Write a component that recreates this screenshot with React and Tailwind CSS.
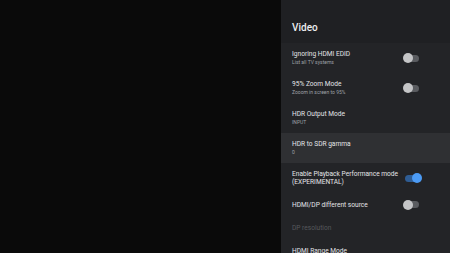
const rows = [
  { title: "Ignoring HDMI EDID", sub: "List all TV systems", toggle: "off" },
  { title: "95% Zoom Mode", sub: "Zooom in screen to 95%", toggle: "off" },
  { title: "HDR Output Mode", sub: "INPUT" },
  { title: "HDR to SDR gamma", sub: "0", active: true },
  { title: "Enable Playback Performance mode", title2: "(EXPERIMENTAL)", toggle: "on" },
  { title: "HDMI/DP different source", toggle: "off", short: true },
  { title: "DP resolution", disabled: true, short: true },
  { title: "HDMI Range Mode", short: true },
];

const Toggle = ({ on }) => (
  <div className="relative w-[14px] h-[7px]">
    <div className={`absolute inset-0 rounded-full ${on ? "bg-[#2f5d94]" : "bg-[#5a5c60]"}`} />
    <div
      className={`absolute top-[-1.5px] w-[10px] h-[10px] rounded-full ${
        on ? "left-[7px] bg-[#4c9bf5]" : "left-[-2px] bg-[#c4c5c7]"
      }`}
    />
  </div>
);

export default function App() {
  return (
    <div
      className="w-[450px] h-[253px] overflow-hidden flex bg-[#0a0a0a]"
      style={{ fontFamily: "Roboto, 'Noto Sans', sans-serif" }}
    >
      <div className="flex-1" />
      <div className="w-[169px] h-full flex flex-col bg-[#232427]">
        <div className="h-[43px] shrink-0 bg-[#1f2023] flex items-center pl-[11px] pt-[13px]">
          <span className="text-[10px] font-medium text-[#eceef0] leading-none">Video</span>
        </div>
        {rows.map((r) => (
          <div
            key={r.title}
            className={`shrink-0 flex items-center justify-between pl-[11px] pr-[31px] ${
              r.short ? "h-[23px]" : "h-[30px]"
            } ${r.active ? "bg-[#2f3033]" : ""}`}
          >
            <div className="flex flex-col">
              <span
                className={`text-[6.6px] leading-[8px] whitespace-nowrap ${
                  r.disabled ? "text-[#56585c]" : "text-[#e3e5e8]"
                }`}
              >
                {r.title}
              </span>
              {r.title2 && (
                <span className="text-[6.6px] leading-[8px] text-[#e3e5e8]">{r.title2}</span>
              )}
              {r.sub && (
                <span className="text-[5px] leading-[7px] mt-[1px] text-[#9ea1a6]">{r.sub}</span>
              )}
            </div>
            {r.toggle && <Toggle on={r.toggle === "on"} />}
          </div>
        ))}
      </div>
    </div>
  );
}
